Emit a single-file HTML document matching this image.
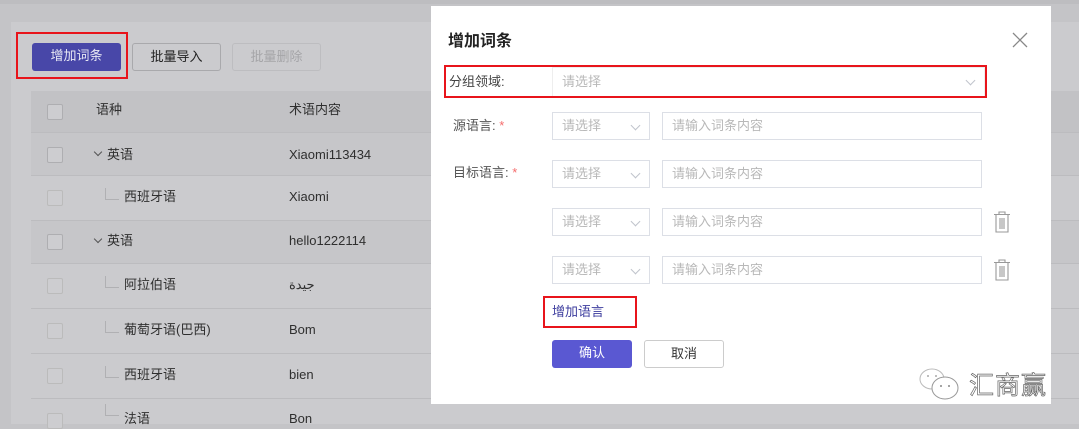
<!DOCTYPE html>
<html><head><meta charset="utf-8"><style>
*{margin:0;padding:0;box-sizing:border-box}
body{width:1079px;height:424px;overflow:hidden;background:#c4c4c7;font-family:"Liberation Sans","Noto Sans CJK SC",sans-serif;font-size:13px;color:#333;position:relative}
.abs{position:absolute}
.top{left:0;top:0;width:1079px;height:4px;background:#bdbdc0}
.card{left:11px;top:22px;width:1068px;height:402px;background:#cbcbce}
.btn{position:absolute;height:28px;border-radius:3px;font-size:13px;line-height:26px;text-align:center}
.th{left:31px;top:91px;width:1048px;height:41px;background:#c2c2c5}
.row{position:absolute;left:31px;width:1048px;border-top:1px solid #bcbcbf}
.cb{position:absolute;left:47px;width:16px;height:16px;border:1px solid #aeaeb1;border-radius:2px;background:#cdcdd0}
.t{position:absolute;font-size:13px;color:#2f2f2f;line-height:20px;height:20px;white-space:nowrap}
.tree{position:absolute;width:14px;height:12px;border-left:1px solid #b0b0b3;border-bottom:1px solid #b0b0b3}
.ch{position:absolute;width:6px;height:6px;border-right:1px solid #555;border-bottom:1px solid #555;transform:rotate(45deg)}
.modal{left:431px;top:6px;width:620px;height:398px;background:#fff}
.sel{position:absolute;border:1px solid #dcdfe6;height:28px;color:#b8b8b8;font-size:13px;line-height:26px;padding-left:9px}
.chev{position:absolute;right:10px;top:9px;width:7px;height:7px;border-right:1px solid #c0c4cc;border-bottom:1px solid #c0c4cc;transform:rotate(45deg)}
.lbl{position:absolute;left:22px;font-size:13px;color:#555;line-height:20px}
.star{color:#f56c6c}
.red{position:absolute;border:2px solid #e8141b}
</style></head><body>
<div class="abs top"></div>
<div class="abs card"></div>
<div class="btn" style="left:32px;top:43px;width:89px;background:#4847a8;color:#e8e8f4">增加词条</div>
<div class="red" style="left:16px;top:32px;width:112px;height:47px"></div>
<div class="btn" style="left:132px;top:43px;width:89px;border:1px solid #a9a9ac;color:#222">批量导入</div>
<div class="btn" style="left:232px;top:43px;width:89px;border:1px solid #bdbdc0;color:#a5a5a8">批量删除</div>
<div class="abs th"></div>
<div class="cb" style="top:104px"></div>
<div class="t" style="left:96px;top:100px">语种</div>
<div class="t" style="left:289px;top:100px">术语内容</div>

<div class="row" style="top:132px;height:44px;background:#c6c6c9"></div>
<div class="cb" style="top:147px"></div>
<div class="ch" style="left:95px;top:149px"></div>
<div class="t" style="left:107px;top:145px">英语</div>
<div class="t" style="left:289px;top:145px">Xiaomi113434</div>

<div class="row" style="top:175px;height:45px"></div>
<div class="cb" style="top:190px;border-color:#bbb"></div>
<div class="tree" style="left:105px;top:188px"></div>
<div class="t" style="left:124px;top:187px">西班牙语</div>
<div class="t" style="left:289px;top:187px">Xiaomi</div>

<div class="row" style="top:220px;height:44px;background:#c6c6c9"></div>
<div class="cb" style="top:234px"></div>
<div class="ch" style="left:95px;top:236px"></div>
<div class="t" style="left:107px;top:231px">英语</div>
<div class="t" style="left:289px;top:231px">hello1222114</div>

<div class="row" style="top:263px;height:45px"></div>
<div class="cb" style="top:278px;border-color:#bbb"></div>
<div class="tree" style="left:105px;top:276px"></div>
<div class="t" style="left:124px;top:275px">阿拉伯语</div>
<div class="t" style="left:289px;top:275px">جيدة</div>

<div class="row" style="top:308px;height:45px"></div>
<div class="cb" style="top:323px;border-color:#bbb"></div>
<div class="tree" style="left:105px;top:321px"></div>
<div class="t" style="left:124px;top:320px">葡萄牙语(巴西)</div>
<div class="t" style="left:289px;top:320px">Bom</div>

<div class="row" style="top:353px;height:45px"></div>
<div class="cb" style="top:368px;border-color:#bbb"></div>
<div class="tree" style="left:105px;top:366px"></div>
<div class="t" style="left:124px;top:365px">西班牙语</div>
<div class="t" style="left:289px;top:365px">bien</div>

<div class="row" style="top:398px;height:30px"></div>
<div class="cb" style="top:413px;border-color:#bbb"></div>
<div class="tree" style="left:105px;top:404px"></div>
<div class="t" style="left:124px;top:409px">法语</div>
<div class="t" style="left:289px;top:409px">Bon</div>

<div class="abs modal">
  <div style="position:absolute;left:17px;top:21px;font-size:16px;font-weight:bold;color:#222">增加词条</div>
  <svg style="position:absolute;left:581px;top:26px" width="16" height="16"><path d="M1 1L15 15M15 1L1 15" stroke="#888" stroke-width="1.3"/></svg>
  <div class="sel" style="left:121px;top:61px;width:433px;height:30px;line-height:28px;border-color:#eee">请选择<div class="chev"></div></div>
  <div class="red" style="left:13px;top:59px;width:543px;height:33px"></div>
  <div class="lbl" style="left:18px;top:66px;color:#444">分组领域:</div>

  <div class="lbl" style="top:110px">源语言: <span class="star">*</span></div>
  <div class="sel" style="left:121px;top:106px;width:98px">请选择<div class="chev"></div></div>
  <div class="sel" style="left:231px;top:106px;width:320px">请输入词条内容</div>

  <div class="lbl" style="top:157px">目标语言: <span class="star">*</span></div>
  <div class="sel" style="left:121px;top:154px;width:98px">请选择<div class="chev"></div></div>
  <div class="sel" style="left:231px;top:154px;width:320px">请输入词条内容</div>

  <div class="sel" style="left:121px;top:202px;width:98px">请选择<div class="chev"></div></div>
  <div class="sel" style="left:231px;top:202px;width:320px">请输入词条内容</div>
  <svg style="position:absolute;left:562px;top:205px" width="18" height="22"><path d="M1 3.5H17M6 3.5V1H12V3.5M3 3.5V21H15V3.5M7 7V18M9 7V18M11 7V18" stroke="#999" stroke-width="1.1" fill="none"/></svg>

  <div class="sel" style="left:121px;top:250px;width:98px">请选择<div class="chev"></div></div>
  <div class="sel" style="left:231px;top:250px;width:320px">请输入词条内容</div>
  <svg style="position:absolute;left:562px;top:253px" width="18" height="22"><path d="M1 3.5H17M6 3.5V1H12V3.5M3 3.5V21H15V3.5M7 7V18M9 7V18M11 7V18" stroke="#999" stroke-width="1.1" fill="none"/></svg>

  <div class="red" style="left:112px;top:290px;width:94px;height:32px"></div>
  <div style="position:absolute;left:121px;top:296px;color:#3d3d9e;font-size:13px;line-height:20px">增加语言</div>

  <div class="btn" style="left:121px;top:334px;width:80px;background:#5a58d2;color:#fff">确认</div>
  <div class="btn" style="left:213px;top:334px;width:80px;border:1px solid #ccc;color:#333">取消</div>

  <svg style="position:absolute;left:487px;top:360px" width="45" height="36"><ellipse cx="14" cy="13" rx="12" ry="10" fill="none" stroke="#bbb"/><ellipse cx="27" cy="22" rx="13" ry="11" fill="#fff" stroke="#999"/><circle cx="23" cy="20" r="1" fill="#888"/><circle cx="31" cy="20" r="1" fill="#888"/><circle cx="10" cy="10" r="1" fill="#aaa"/><circle cx="18" cy="10" r="1" fill="#aaa"/></svg>
  <div style="position:absolute;left:538px;top:360px;font-size:25px;color:#fff;-webkit-text-stroke:0.7px #666;letter-spacing:1px">汇商赢</div>
</div>
</body></html>
